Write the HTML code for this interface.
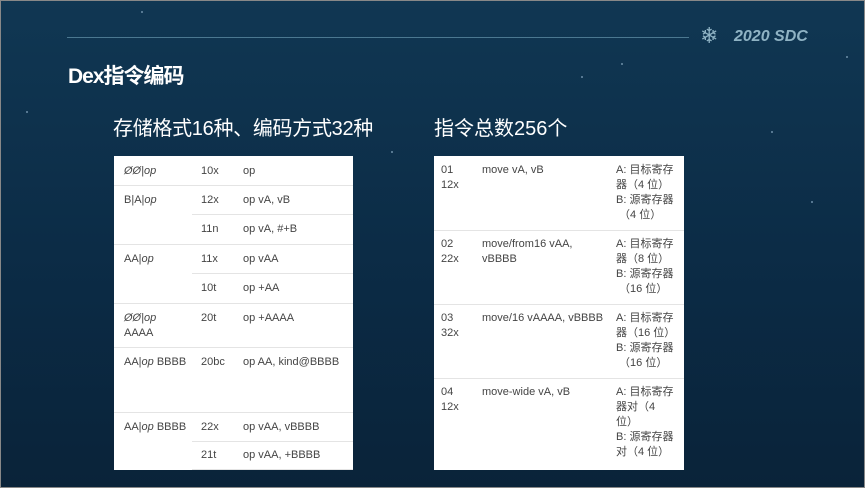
<!DOCTYPE html>
<html><head><meta charset="utf-8"><style>
*{margin:0;padding:0;box-sizing:border-box}
body{width:865px;height:488px;overflow:hidden;background:linear-gradient(#103753,#0b2a44 60%,#0a2339);position:relative;font-family:"Liberation Sans","Noto Sans CJK SC",sans-serif;border:1px solid #888}
.ab{position:absolute}
.t{color:#444;font-size:11px;line-height:15px;white-space:nowrap}
.hl{position:absolute;height:1px;background:#e4e4e4}
.star{position:absolute;width:2px;height:2px;background:#6d8fa8;border-radius:1px}
</style></head><body>
<div class="ab" style="left:66px;top:36px;width:622px;height:1px;background:#4b7890"></div>
<div class="ab" style="left:699px;top:22px;color:#8fb3c4;font-size:22px">❄</div>
<div class="ab" style="left:733px;top:27px;color:#8fb3c4;font-size:16px;font-weight:bold;font-style:italic">2020 SDC</div>
<div class="ab" style="left:67px;top:59px;color:#fff;font-size:21px;font-weight:bold;letter-spacing:-1px">Dex指令编码</div>
<div class="ab" style="left:112px;top:111px;color:#fff;font-size:20px;letter-spacing:-0.3px">存储格式16种、编码方式32种</div>
<div class="ab" style="left:433px;top:111px;color:#fff;font-size:20px;letter-spacing:0px">指令总数256个</div>
<div class="star" style="left:140px;top:10px"></div><div class="star" style="left:390px;top:150px"></div><div class="star" style="left:620px;top:62px"></div><div class="star" style="left:810px;top:200px"></div><div class="star" style="left:845px;top:55px"></div><div class="star" style="left:25px;top:110px"></div><div class="star" style="left:770px;top:130px"></div><div class="star" style="left:580px;top:75px"></div>

<div class="ab" style="left:113px;top:155px;width:239px;height:314px;background:#fff">
<div class="hl" style="left:0;top:29px;width:239px"></div>
<div class="hl" style="left:78px;top:58px;width:161px"></div>
<div class="hl" style="left:0;top:88px;width:239px"></div>
<div class="hl" style="left:78px;top:117px;width:161px"></div>
<div class="hl" style="left:0;top:147px;width:239px"></div>
<div class="hl" style="left:0;top:191px;width:239px"></div>
<div class="hl" style="left:0;top:256px;width:239px"></div>
<div class="hl" style="left:78px;top:285px;width:161px"></div>
<div class="hl" style="left:78px;top:313px;width:161px"></div>
<div class="ab t" style="left:10px;top:8px"><i>ØØ|op</i></div><div class="ab t" style="left:87px;top:8px">10x</div><div class="ab t" style="left:129px;top:8px">op</div>
<div class="ab t" style="left:10px;top:37px">B|A|<i>op</i></div><div class="ab t" style="left:87px;top:37px">12x</div><div class="ab t" style="left:129px;top:37px">op vA, vB</div>
<div class="ab t" style="left:87px;top:66px">11n</div><div class="ab t" style="left:129px;top:66px">op vA, #+B</div>
<div class="ab t" style="left:10px;top:96px">AA|<i>op</i></div><div class="ab t" style="left:87px;top:96px">11x</div><div class="ab t" style="left:129px;top:96px">op vAA</div>
<div class="ab t" style="left:87px;top:125px">10t</div><div class="ab t" style="left:129px;top:125px">op +AA</div>
<div class="ab t" style="left:10px;top:155px"><i>ØØ|op</i><br>AAAA</div><div class="ab t" style="left:87px;top:155px">20t</div><div class="ab t" style="left:129px;top:155px">op +AAAA</div>
<div class="ab t" style="left:10px;top:199px">AA|<i>op</i> BBBB</div><div class="ab t" style="left:87px;top:199px">20bc</div><div class="ab t" style="left:129px;top:199px">op AA, kind@BBBB</div>
<div class="ab t" style="left:10px;top:264px">AA|<i>op</i> BBBB</div><div class="ab t" style="left:87px;top:264px">22x</div><div class="ab t" style="left:129px;top:264px">op vAA, vBBBB</div>
<div class="ab t" style="left:87px;top:292px">21t</div><div class="ab t" style="left:129px;top:292px">op vAA, +BBBB</div>
</div>

<div class="ab" style="left:433px;top:155px;width:250px;height:314px;background:#fff">
<div class="hl" style="left:0;top:74px;width:250px"></div>
<div class="hl" style="left:0;top:148px;width:250px"></div>
<div class="hl" style="left:0;top:222px;width:250px"></div>
<div class="ab t" style="left:7px;top:7px">01<br>12x</div><div class="ab t" style="left:48px;top:7px">move vA, vB</div>
<div class="ab t" style="left:182px;top:7px">A:&nbsp;目标寄存<br>器（4 位）<br>B:&nbsp;源寄存器<br>&nbsp;（4 位）</div>
<div class="ab t" style="left:7px;top:81px">02<br>22x</div><div class="ab t" style="left:48px;top:81px">move/from16 vAA,<br>vBBBB</div>
<div class="ab t" style="left:182px;top:81px">A:&nbsp;目标寄存<br>器（8 位）<br>B:&nbsp;源寄存器<br>&nbsp;（16 位）</div>
<div class="ab t" style="left:7px;top:155px">03<br>32x</div><div class="ab t" style="left:48px;top:155px">move/16 vAAAA, vBBBB</div>
<div class="ab t" style="left:182px;top:155px">A:&nbsp;目标寄存<br>器（16 位）<br>B:&nbsp;源寄存器<br>&nbsp;（16 位）</div>
<div class="ab t" style="left:7px;top:229px">04<br>12x</div><div class="ab t" style="left:48px;top:229px">move-wide vA, vB</div>
<div class="ab t" style="left:182px;top:229px">A:&nbsp;目标寄存<br>器对（4<br>位）<br>B:&nbsp;源寄存器<br>对（4 位）</div>
</div>
</body></html>
